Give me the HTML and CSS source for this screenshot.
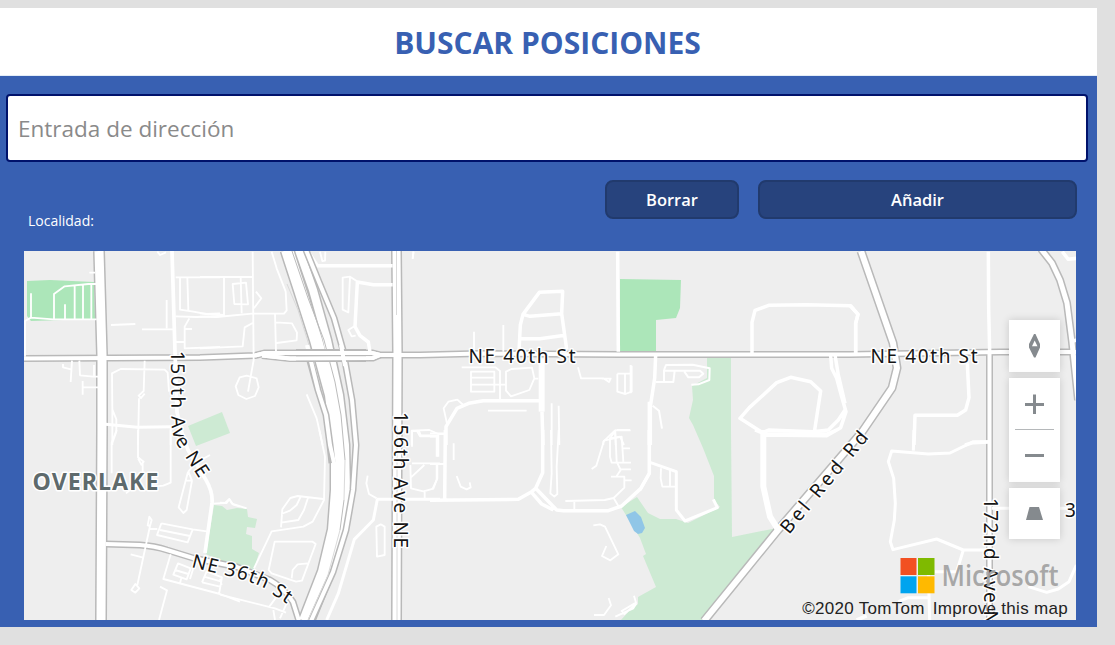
FILE: index.html
```html
<!DOCTYPE html>
<html lang="es">
<head>
<meta charset="utf-8">
<title>Buscar posiciones</title>
<link rel="stylesheet" href="styles.css">
</head>
<body>
<main class="app">
  <header class="header"><h1 class="title">BUSCAR POSICIONES</h1></header>
  <input class="address" type="text" placeholder="Entrada de dirección">
  <div class="actions">
    <span class="locality">Localidad:</span>
    <button class="btn btn-clear">Borrar</button>
    <button class="btn btn-add">Añadir</button>
  </div>
  <section class="map">
    <svg class="map-canvas" viewBox="24 251 1052 369" width="1052" height="369">
      <defs>
        <path id="p150" d="M171 351L171.500 420Q172 438 178 446L204 486"/>
        <path id="p156" d="M393.500 412V560"/>
        <path id="p172" d="M983.500 498V660"/>
        <path id="pbel" d="M789 535L879 426"/>
        <path id="p36" d="M191 567L215 573Q245 579 262 587L292 607"/>
      </defs>

      <!-- parks and water -->
      <g class="park-strong">
        <path d="M27 281L50 280L94 282L95 319L31 321L27 316Z"/>
        <path d="M620 279L681 280L680 308L676 318L656 320V353H620Z"/>
      </g>
      <g class="park">
        <path d="M188 426L222 412L230 433L196 446Z"/>
        <path d="M214 505L222 506L227 510L237 508L247 509L248 517L257 519L255 528L247 527L246 534L252 536V549L259 553L254 569L232 567L206 554Z"/>
        <path d="M707 358H731V430L732 537L777 528L703 620H621L630 610L638 604V597L656 587L643 556L646 554L640 538L621 507L637 497L648 513L660 519H676L688 523L720 507L714 500V476L703 448L693 425L689 418L693 400L692 386L707 378Z"/>
      </g>
      <path class="water" d="M626 515L635 511L641 517L645 528L642 533L638 534L634 531Z"/>

      <!-- casings -->
      <g class="casing">
        <path class="w12" d="M99 251L102 355V430L101 620"/>
        <path class="w7" d="M24 358.500L200 357.500L255 355.500L265 353H372L380 355L420 355L480 353.500L620 354.500L850 354.500L1000 352H1076"/>
        <path class="w7" d="M262 355.500L290 358.500L373 358L380 355"/>
        <path class="w11" d="M396.500 251L397.500 355L396.500 620"/>
        <path class="w9" d="M861 251L893 343L897 368L892 388L862 432L778 530L704 621"/>
        <path class="w8" d="M1041 249L1052 263L1060 280L1067 303L1072 342L1078 400"/>
        <path class="w7" d="M989.500 353V620"/>
        <path class="w7" d="M106 544L140 545Q155 546 167 550L193 558L237 567L270 580Q283 587 293 602L299 621"/>
        <path class="w15" d="M287 250L300 290L316 340L331 395L337 445V490L334 530L324 572L305 621"/>
        <path class="w11" d="M299 250L313 290L327 340L339 395L345 445L346 490L341 530L330 571L310 621"/>
      </g>

      <!-- local streets -->
      <g class="local">
        <g transform="translate(20 245) scale(.33333)">
          <path d="M33 145V218M15 335V228L33 218L100 223H230M102 222V147L134 124L205 117H230M135 222V178M164 222V123M189 222V120M214 222V118M208 83H225M273 240L346 237M366 253H462M440 165V250M412 20L420 30L438 22M129 357V367L153 373M156 347L152 411M178 347L180 391L220 395H235M222 360V395M188 449V408M188 427H235M277 600V492L276 385L302 372L434 374L443 383L447 440M374 347L371 438L356 452L363 459L374 446M357 460L354 600M452 550V600M277 493L289 523V560L275 600M467 97H600M480 97V194L520 200L558 207L600 205M502 97L505 195M467 214L530 216L600 213M508 220L494 245V310L600 306M494 252H516M466 291H494"/>
          <path class="t3" d="M257 538L352 547L455 545"/>
        </g>
        <g transform="translate(200 245) scale(.33333)">
          <path d="M0 96H158M158 20L161 345L144 440M0 205L72 210V97M0 215L50 216L156 206H252L260 196L257 140L230 70L215 20M98 117L138 113L144 178L103 177ZM122 97L125 205M168 140L184 160L162 190M225 206L228 320M228 232L276 235L291 263L290 286L230 294M158 234L134 247L128 304L0 310M140 392L170 400L176 427L165 453L139 462L115 450L107 424L119 397ZM320 448L350 520L368 600M428 98L450 95L445 202L428 194ZM450 95L470 108M463 244L445 255L455 274L467 272M360 20L367 48L375 47L376 20M638 40L641 20M635 600V558H660"/>
          <path class="t4" d="M325 20L352 62H578M578 119H520L472 111L465 245L480 272L505 291L510 322"/>
        </g>
        <g transform="translate(400 245) scale(.33333)">
          <path d="M40 20L38 42M222 260V320M310 240V320M185 367H286L300 378V465M213 380H283V440H213ZM213 398H283M213 419H316M334 372L396 368L403 400L388 435L333 454L318 437V380ZM403 401H415M264 497H380M142 540L131 490L145 470L172 464L190 480M534 367L543 400H610L627 411L632 401L605 401M652 386H695V362M652 386V440L676 447L695 440V386M675 386V447M455 475V600M476 482L478 600M34 557L88 555L115 567H136M52 560L60 574H112V600M692 556H645L610 590V600M628 580L660 575L672 600M645 558L647 600"/>
          <path class="t4" d="M357 320L361 240L369 208L418 142L488 139L485 206L500 313M369 208L390 214L485 206M364 281H420L495 271M138 600V545L171 490L206 475L250 467H420"/>
          <path class="t4" d="M653 20L655 320"/>
          <path class="t6" d="M425 340V500"/><path class="t4" d="M426 500L429 600M748 470V600"/>
        </g>
        <g transform="translate(620 245) scale(.33333)">
          <path class="t4" d="M107 330L104 400L91 485V600M396 325V232L405 196L446 181L560 179L692 182L714 208L707 235V325M632 330L635 370L650 400L665 455L678 500L662 548L620 572L425 570M645 330L655 390L675 475M583 562L602 438L572 410L512 397L470 413L388 488L360 520L428 563L446 555L580 560L625 555L655 525L675 495M430 565V600"/>
          <path class="t2" d="M130 377H240L250 386L237 397H205L193 380M132 375L138 360L218 359L269 370L268 405L235 418L214 419M132 375V408M108 411H160L164 378M98 482L117 497L126 551M32 360V445"/>
        </g>
        <g transform="translate(850 245) scale(.33333)">
          <path class="t4" d="M0 182L24 208L17 235V325M415 20L416 190L419 320M352 355L357 458L347 495L322 511H195L192 600M345 600L370 593L415 591M637 20L655 43L679 40M665 290L679 285"/>
        </g>
        <g transform="translate(20 430) scale(.33333)">
          <path d="M290 0L275 38V130M354 0V82L371 95L364 104L354 85M368 100V130M318 190L330 180M452 0V158L430 167L400 170M504 125L476 232L490 249L500 240L516 152L497 152M505 125L516 152M505 125L525 100L570 75M388 260L395 270L390 288L383 286ZM390 288L352 465M346 462L358 475L346 488L334 480ZM387 297H412M424 280L518 298L560 304M424 280L411 315L503 337L518 298M420 300L510 318M332 373L367 382M452 373L430 447L600 492L660 515M474 400L512 415L500 448L460 434ZM465 420L505 432M484 443L480 460M560 424L606 442L597 492M552 440L605 455M546 457L600 470M560 424L546 457M520 415L510 447M420 470L441 481L417 570M580 221L615 219L628 207L640 224L660 230"/>
        </g>
        <g transform="translate(220 430) scale(.33333)">
          <path d="M0 218L20 219L28 208L36 221L80 235M298 0L315 80L312 210L278 275L250 290L155 304L102 415M310 207L233 198L211 204L187 238L183 292M265 200L252 240L235 270L183 278M242 200L230 225L210 242L184 252M164 335H278L287 342L246 452L228 455L155 430L146 420ZM215 445L218 420L233 403L263 400M0 446L5 465M0 494L165 535L198 548M170 500L148 530M200 520L180 565M160 540L165 570M482 283L494 290V375L471 380L469 290ZM443 137L439 160L447 192L470 205M576 100H660M576 0V50M596 0L602 16H655V80M571 105L573 175L610 184L640 176L650 150V100M573 142L613 105M614 184V206"/>
          <path class="t3" d="M470 208H660M472 208L460 270L403 328L355 490L320 570"/>
        </g>
        <g transform="translate(430 430) scale(.33333)">
          <path d="M0 10H44M0 20H20V80M22 20V80M0 102H44M22 102V145L7 178M71 40V90M80 138L92 170L110 178L122 172L119 157M363 0L365 130L361 190L373 200L382 192L380 110L386 0M406 213L524 210L551 204L583 173V140H543M433 213V238M551 204L565 228M485 117L499 107L522 32L575 20L580 95M558 0L540 25V80L545 98H603M556 5L560 95L572 120L560 138M570 118H603M580 55H600M583 151H605M560 0H600M490 286L510 283L525 290L565 373L541 391L516 378L529 348M536 504L543 526L522 555H492M612 497L618 518L575 543L583 552L618 522L610 535L556 560"/>
          <path class="t4" d="M46 0L44 210M0 211L265 208L305 185L317 175L338 128V0M317 175L380 240L400 242H535L575 228L632 176L658 130V0M302 184L335 222L370 240"/>
        </g>
        <g transform="translate(640 430) scale(.33333)">
          <path class="t3" d="M28 0V130L0 180M32 98L109 125V240L135 273L232 233L220 208"/>
          <path d="M63 115L62 145L67 170H108M90 120V170"/>
          <path class="t6" d="M370 0V170L390 260L412 295"/>
          <path class="t4" d="M345 0L375 12H560L590 0M650 570L680 558"/>
        </g>
        <g transform="translate(865 430) scale(.33333)">
          <path class="t3" d="M147 0L145 62M375 35H325L255 69L190 72L80 63L70 95L86 145L91 220L88 270L76 335L84 359L215 327L295 360H375M295 360L275 425H210M380 235H635M190 425L194 570M100 515L130 503H190M490 470L545 487L580 477L612 455L634 405"/>
        </g>
        <path class="a150" d="M172 251L175 352L177 412L181 430L188 450L206 480Q213 492 212 503L205 553"/>
      </g>

      <!-- main road surfaces -->
      <g class="surface">
        <path class="w9" d="M99 251L102 355V430L101 620"/>
        <path class="w4" d="M24 358.500L200 357.500L255 355.500L265 353H372L380 355L420 355L480 353.500L620 354.500L850 354.500L1000 352H1076"/>
        <path class="w4" d="M262 355.500L290 358.500L373 358L380 355"/>
        <path class="w8" d="M396.500 251L397.500 355L396.500 620"/>
        <path class="w6" d="M861 251L893 343L897 368L892 388L862 432L778 530L704 621"/>
        <path class="w5" d="M1041 249L1052 263L1060 280L1067 303L1072 342L1078 400"/>
        <path class="w4" d="M989.500 353V620"/>
        <path class="w4" d="M106 544L140 545Q155 546 167 550L193 558L237 567L270 580Q283 587 293 602L299 621"/>
        <path class="w12" d="M287 250L300 290L316 340L331 395L337 445V490L334 530L324 572L305 621"/>
        <path class="w8" d="M299 250L313 290L327 340L339 395L345 445L346 490L341 530L330 571L310 621"/>
      </g>
      <!-- freeway ramps and lane dividers -->
      <path class="edge w7" d="M306 250L319 282L334 318L343 350L352 400L356 445L353 490L346 530L333 572L311 621"/>
      <path class="face w4" d="M306 250L319 282L334 318L343 350L352 400L356 445L353 490L346 530L333 572L311 621"/>
      <path class="edge w7" d="M309 357L318 390L326 415L330 445L332 463"/>
      <path class="face w4" d="M307 345L318 390L326 415L330 445L334 463L334 490"/>
      <path class="divider" d="M292 251L308 298L324 340L335 382L341 415L345 460M344 500L340 530"/>
      <path class="divider soft" d="M287 284L298 310L309 345M345 460L344 500M340 530L328 575L308 620"/>
      <path class="divider soft" d="M396.500 251V315M397 425V620"/>
      <path class="edge w7" d="M296 352.500H366M296 358.500H366"/>
      <path class="face w4" d="M255 355.500L265 353H372L380 355M262 355.500L290 358.500L373 358L380 355M341 345L345 366M394 355H401M99 358.500H105"/>

      <!-- labels -->
      <g class="label">
        <text x="468.500" y="363" textLength="107">NE 40th St</text>
        <text x="870.500" y="363" textLength="107">NE 40th St</text>
        <text><textPath href="#p150" textLength="135">150th Ave NE</textPath></text>
        <text><textPath href="#p156" textLength="136">156th Ave NE</textPath></text>
        <text><textPath href="#p172" textLength="127">172nd Ave N</textPath></text>
        <text><textPath href="#pbel" textLength="126">Bel Red Rd</textPath></text>
        <text><textPath href="#p36" textLength="104">NE 36th St</textPath></text>
        <text x="1065" y="517">3</text>
        <text class="district" x="32.500" y="489.500" textLength="127" lengthAdjust="spacingAndGlyphs">OVERLAKE</text>
      </g>
    </svg>

    <div class="controls">
      <div class="control"><svg width="51" height="52" viewBox="0 0 51 52"><path fill="#858a8e" fill-rule="evenodd" d="M25 14H26.500L31 24V27.500L26.500 37.500H25L20 27.500V24ZM25.700 20.500L23 26.300H28.500Z"/></svg></div>
      <div class="control zoom">
        <svg width="51" height="52" viewBox="0 0 51 52"><path fill="#858a8e" d="M24 16.500H27V25H35V28H27V36H24V28H16V25H24Z"/><path fill="#b5b8ba" d="M6 51H45V52H6Z"/></svg>
        <svg width="51" height="52" viewBox="0 0 51 52"><path fill="#858a8e" d="M16 24H35V27H16Z"/></svg>
      </div>
      <div class="control"><svg width="51" height="51" viewBox="0 0 51 51"><path fill="#858a8e" d="M20.500 19H30L34 32H17Z"/></svg></div>
    </div>

    <div class="credits">
      <svg class="brand" width="160" height="38" viewBox="0 0 160 38">
        <path fill="#f25022" d="M.5 1H16.500V18H.5Z"/><path fill="#7fba00" d="M18 1H34.500V18H18Z"/>
        <path fill="#00a4ef" d="M.5 19.300H16.500V36.300H.5Z"/><path fill="#ffb900" d="M18 19.300H34.500V36.300H18Z"/>
        <text class="brand-name" x="41.500" y="29" textLength="117" lengthAdjust="spacingAndGlyphs">Microsoft</text>
      </svg>
      <div class="legal"><span>©2020 TomTom</span><span>Improve this map</span></div>
    </div>
  </section>
</main>
</body>
</html>
```
FILE: styles.css
```css
* { box-sizing: border-box; }
body {
  margin: 0;
  padding-top: 8px;
  height: 645px;
  overflow: hidden;
  background: #e0e0e0;
  font-family: "Open Sans", "Noto Sans", sans-serif;
}
.app {
  display: flex;
  flex-direction: column;
  width: 1097px;
  height: 619px;
  background: #3860b2;
}
.header {
  display: flex;
  align-items: center;
  justify-content: center;
  height: 68px;
  padding-top: 3px;
  background: #fff;
  border-bottom: 1px solid #e4edf7;
}
.title {
  margin: 0;
  padding-right: 2px;
  color: #3860b2;
  font-size: 30px;
  font-weight: 700;
  line-height: 1;
}
.address {
  width: 1082px;
  height: 68px;
  margin: 18px 0 0 6px;
  padding: 1px 10px 0;
  border: 2px solid #00126b;
  border-radius: 4px;
  background: #fff;
  color: #333;
  font: 22.500px "Open Sans", sans-serif;
  outline: none;
}
.address::placeholder { color: #8a8a8a; opacity: 1; }
.actions {
  display: flex;
  height: 71px;
  margin: 18px 20px 0 28px;
}
.locality {
  flex: 1;
  padding-top: 32px;
  color: #fff;
  font-size: 14px;
  line-height: 18px;
}
.btn {
  height: 39px;
  padding: 0;
  border: 2px solid #213a6d;
  border-radius: 8px;
  background: #27437d;
  color: #fff;
  font: 600 16.500px "Open Sans", sans-serif;
}
.btn-clear { width: 134px; margin-right: 19px; }
.btn-add { width: 319px; }

.map {
  position: relative;
  width: 1052px;
  height: 369px;
  margin-left: 24px;
  overflow: hidden;
  background: #eee;
}
.map-canvas { display: block; }
.park-strong { fill: #ace6b9; }
.park { fill: #cdead3; }
.water { fill: #90c6e7; }
.casing, .surface, .local, .edge, .face, .divider { fill: none; stroke-linejoin: round; }
.casing, .edge { stroke: #b9b9b9; }
.surface, .face { stroke: #fff; }
.local { stroke: #fff; stroke-width: 5.500px; }
.t2 { stroke-width: 6px; }
.t3 { stroke-width: 9px; }
.t4 { stroke-width: 10.500px; }
.t6 { stroke-width: 18px; }
.a150 { stroke-width: 3.700px; }
.w4 { stroke-width: 4px; }
.w5 { stroke-width: 5px; }
.w6 { stroke-width: 6px; }
.w7 { stroke-width: 7px; }
.w8 { stroke-width: 8px; }
.w9 { stroke-width: 9px; }
.w11 { stroke-width: 11px; }
.w12 { stroke-width: 12px; }
.w15 { stroke-width: 15px; }
.divider { stroke: #bcbcbc; stroke-width: 1px; }
.soft { stroke: #dadada; }
.label {
  fill: #151515;
  stroke: #fff;
  stroke-width: 3px;
  stroke-linejoin: round;
  paint-order: stroke;
  font: 19px "Noto Sans", sans-serif;
}
.district { fill: #5e6a6c; font-size: 22.500px; font-weight: 700; letter-spacing: 1px; }

.controls {
  position: absolute;
  top: 69px;
  right: 16px;
  display: flex;
  flex-direction: column;
  gap: 6px;
}
.control {
  display: flex;
  flex-direction: column;
  background: #fff;
  box-shadow: 0 0 8px rgba(0, 0, 0, .16);
}
.control svg { display: block; }
.credits {
  position: absolute;
  right: 8px;
  bottom: 1px;
  display: flex;
  flex-direction: column;
  align-items: flex-end;
}
.brand { display: block; margin: 0 8px 4px 0; }
.brand-name {
  fill: #a3a3a3;
  fill-opacity: .94;
  font: 600 29px "Open Sans", sans-serif;
}
.legal {
  display: flex;
  gap: 8px;
  color: #222;
  font: 17px/20px "Liberation Sans", Arial, sans-serif;
  letter-spacing: .3px;
}
```
